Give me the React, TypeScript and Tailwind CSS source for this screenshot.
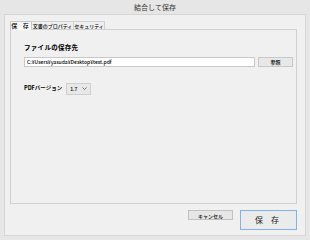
import React from "react";

const jp = { fontFamily: '"Noto Sans CJK JP", "Noto Sans", sans-serif' };

export default function App() {
  return (
    <div className="w-[310px] h-[240px] bg-[#e6e6e6] flex flex-col text-black" style={jp}>
      <div className="h-[14px] flex items-center justify-center text-[7px] leading-none text-[#333]">
        結合して保存
      </div>
      <div className="mx-[4px] mb-[4px] flex-1 border border-[#d6d6d6] bg-[#f0f0f0] flex flex-col pl-[5px] pr-[8px] pt-[5px]">
        <div className="flex items-end h-[9px] text-[5px] leading-none font-medium">
          <div className="h-[9px] w-[22px] flex items-center justify-center border border-b-0 border-[#c8c8c8] bg-[#fafafa] tracking-[2px] text-[6px] relative top-[1px]">
            保 存
          </div>
          <div className="h-[8px] w-[42px] flex items-center justify-center border border-b-0 border-l-0 border-[#d0d0d0] bg-[#f0f0f0]">
            文書のプロパティ
          </div>
          <div className="h-[8px] w-[31px] flex items-center justify-center border border-b-0 border-l-0 border-[#d0d0d0] bg-[#f0f0f0]">
            セキュリティ
          </div>
        </div>
        <div className="h-[175px] border border-[#d0d0d0] bg-[#f0f0f0] pl-[13px] pr-[2px] pt-[14px]">
          <div className="text-[6.5px] font-bold leading-none tracking-[0.3px]">ファイルの保存先</div>
          <div className="mt-[6px] flex items-center gap-[3px]">
            <div className="w-[231px] shrink-0 h-[10px] border border-[#c8c8c8] bg-white flex items-center px-[2px] text-[5px] leading-none font-medium">
              C:¥Users¥yasuda¥Desktop¥test.pdf
            </div>
            <div className="w-[35px] shrink-0 h-[10px] border border-[#c8c8c8] bg-[#e8e8e8] flex items-center justify-center text-[5px] leading-none font-medium">
              参照
            </div>
          </div>
          <div className="mt-[16px] flex items-center gap-[4px]">
            <div className="text-[5.5px] font-bold leading-none">PDFバージョン</div>
            <div className="w-[25px] h-[12px] border border-[#cfcfcf] bg-[#e8e8e8] flex items-center justify-between px-[3px] text-[5px] leading-none font-medium">
              <span>1.7</span>
              <svg width="5" height="3" viewBox="0 0 5 3">
                <path d="M0.5 0.5 L2.5 2.5 L4.5 0.5" stroke="#555" strokeWidth="0.8" fill="none" />
              </svg>
            </div>
          </div>
        </div>
        <div className="flex justify-end items-start gap-[7px] pt-[6px]">
          <div className="w-[45px] h-[10px] border border-[#c0c0c0] bg-[#e6e6e6] flex items-center justify-center text-[5px] leading-none font-medium">
            キャンセル
          </div>
          <div className="w-[57px] h-[20px] border border-[#7eb4ea] bg-[#ebebeb] flex items-center justify-center text-[8px] leading-none tracking-[3px] text-[#222]">
            保 存
          </div>
        </div>
      </div>
    </div>
  );
}
